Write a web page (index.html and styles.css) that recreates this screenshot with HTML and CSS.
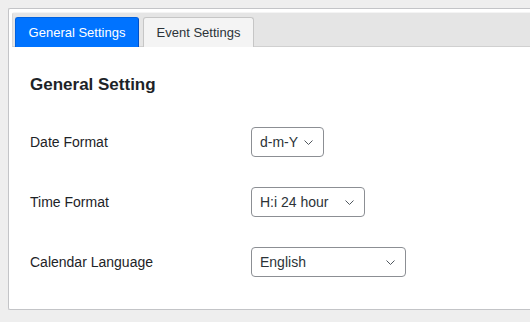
FILE: index.html
```html
<!DOCTYPE html>
<html>
<head>
<meta charset="utf-8">
<link rel="stylesheet" href="styles.css">
</head>
<body>
<div class="panel">
  <div class="tabs">
    <div class="tab active">General Settings</div>
    <div class="tab">Event Settings</div>
  </div>
  <div class="content">
    <h2 class="title">General Setting</h2>
    <div class="rows">
      <div class="row">
        <div class="label">Date Format</div>
        <div class="select w-date"><span>d-m-Y</span><svg class="chev" width="9" height="5" viewBox="0 0 9 5"><path d="M0.5 0.5 L4.5 4.5 L8.5 0.5" fill="none" stroke="#50575e" stroke-width="1"/></svg></div>
      </div>
      <div class="row">
        <div class="label">Time Format</div>
        <div class="select w-time"><span>H:i 24 hour</span><svg class="chev" width="9" height="5" viewBox="0 0 9 5"><path d="M0.5 0.5 L4.5 4.5 L8.5 0.5" fill="none" stroke="#50575e" stroke-width="1"/></svg></div>
      </div>
      <div class="row">
        <div class="label">Calendar Language</div>
        <div class="select w-lang"><span>English</span><svg class="chev" width="9" height="5" viewBox="0 0 9 5"><path d="M0.5 0.5 L4.5 4.5 L8.5 0.5" fill="none" stroke="#50575e" stroke-width="1"/></svg></div>
      </div>
    </div>
  </div>
</div>
</body>
</html>
```
FILE: styles.css
```css
html, body {
  margin: 0;
  padding: 0;
  background: #eeeeee;
  font-family: "Liberation Sans", Arial, sans-serif;
  color: #1d2327;
}
body {
  padding: 8px 0 0 8px;
  height: 322px;
  box-sizing: border-box;
  overflow: hidden;
}
.panel {
  width: 522px;
  height: 302px;
  box-sizing: border-box;
  background: #fff;
  border: 1px solid #c3c4c7;
  border-right: none;
  border-radius: 2px 0 0 2px;
  padding: 3px 0 0 3px;
  display: flex;
  flex-direction: column;
}
.tabs {
  display: flex;
  gap: 4px;
  height: 35px;
  box-sizing: border-box;
  background: #e5e5e5;
  border-top: 1px solid #f4f4f4;
  border-left: 1px solid #d8d8d8;
  border-bottom: 1px solid #d0d0d0;
  border-radius: 3px 0 0 0;
  padding: 4px 0 0 2px;
}
.tab {
  width: 111px;
  height: 30px;
  box-sizing: border-box;
  display: flex;
  align-items: center;
  justify-content: center;
  font-size: 13px;
  color: #2c3338;
  background: #f4f4f4;
  border: 1px solid #c6c6c6;
  border-bottom: none;
  border-radius: 3px 3px 0 0;
}
.tab.active {
  width: 124px;
  background: #0073ff;
  border-color: #0062e0;
  border-right-color: #0050c8;
  color: #fff;
}
.content {
  padding: 28px 0 0 18px;
}
.title {
  margin: 0;
  font-size: 17px;
  line-height: 20px;
  font-weight: bold;
  color: #1d2327;
}
.rows {
  display: flex;
  flex-direction: column;
  gap: 30px;
  margin-top: 32px;
}
.row {
  display: flex;
  align-items: center;
  height: 30px;
}
.label {
  width: 221px;
  font-size: 14px;
  color: #1d2327;
}
.select {
  height: 30px;
  box-sizing: border-box;
  border: 1px solid #8c8f94;
  border-radius: 4px;
  background: #fff;
  display: flex;
  align-items: center;
  justify-content: space-between;
  padding: 0 10px 0 8px;
  font-size: 14px;
  color: #2c3338;
}
.chev {
  display: block;
  flex: none;
}
.w-date { width: 73px; }
.w-time { width: 114px; }
.w-lang { width: 155px; }
```
